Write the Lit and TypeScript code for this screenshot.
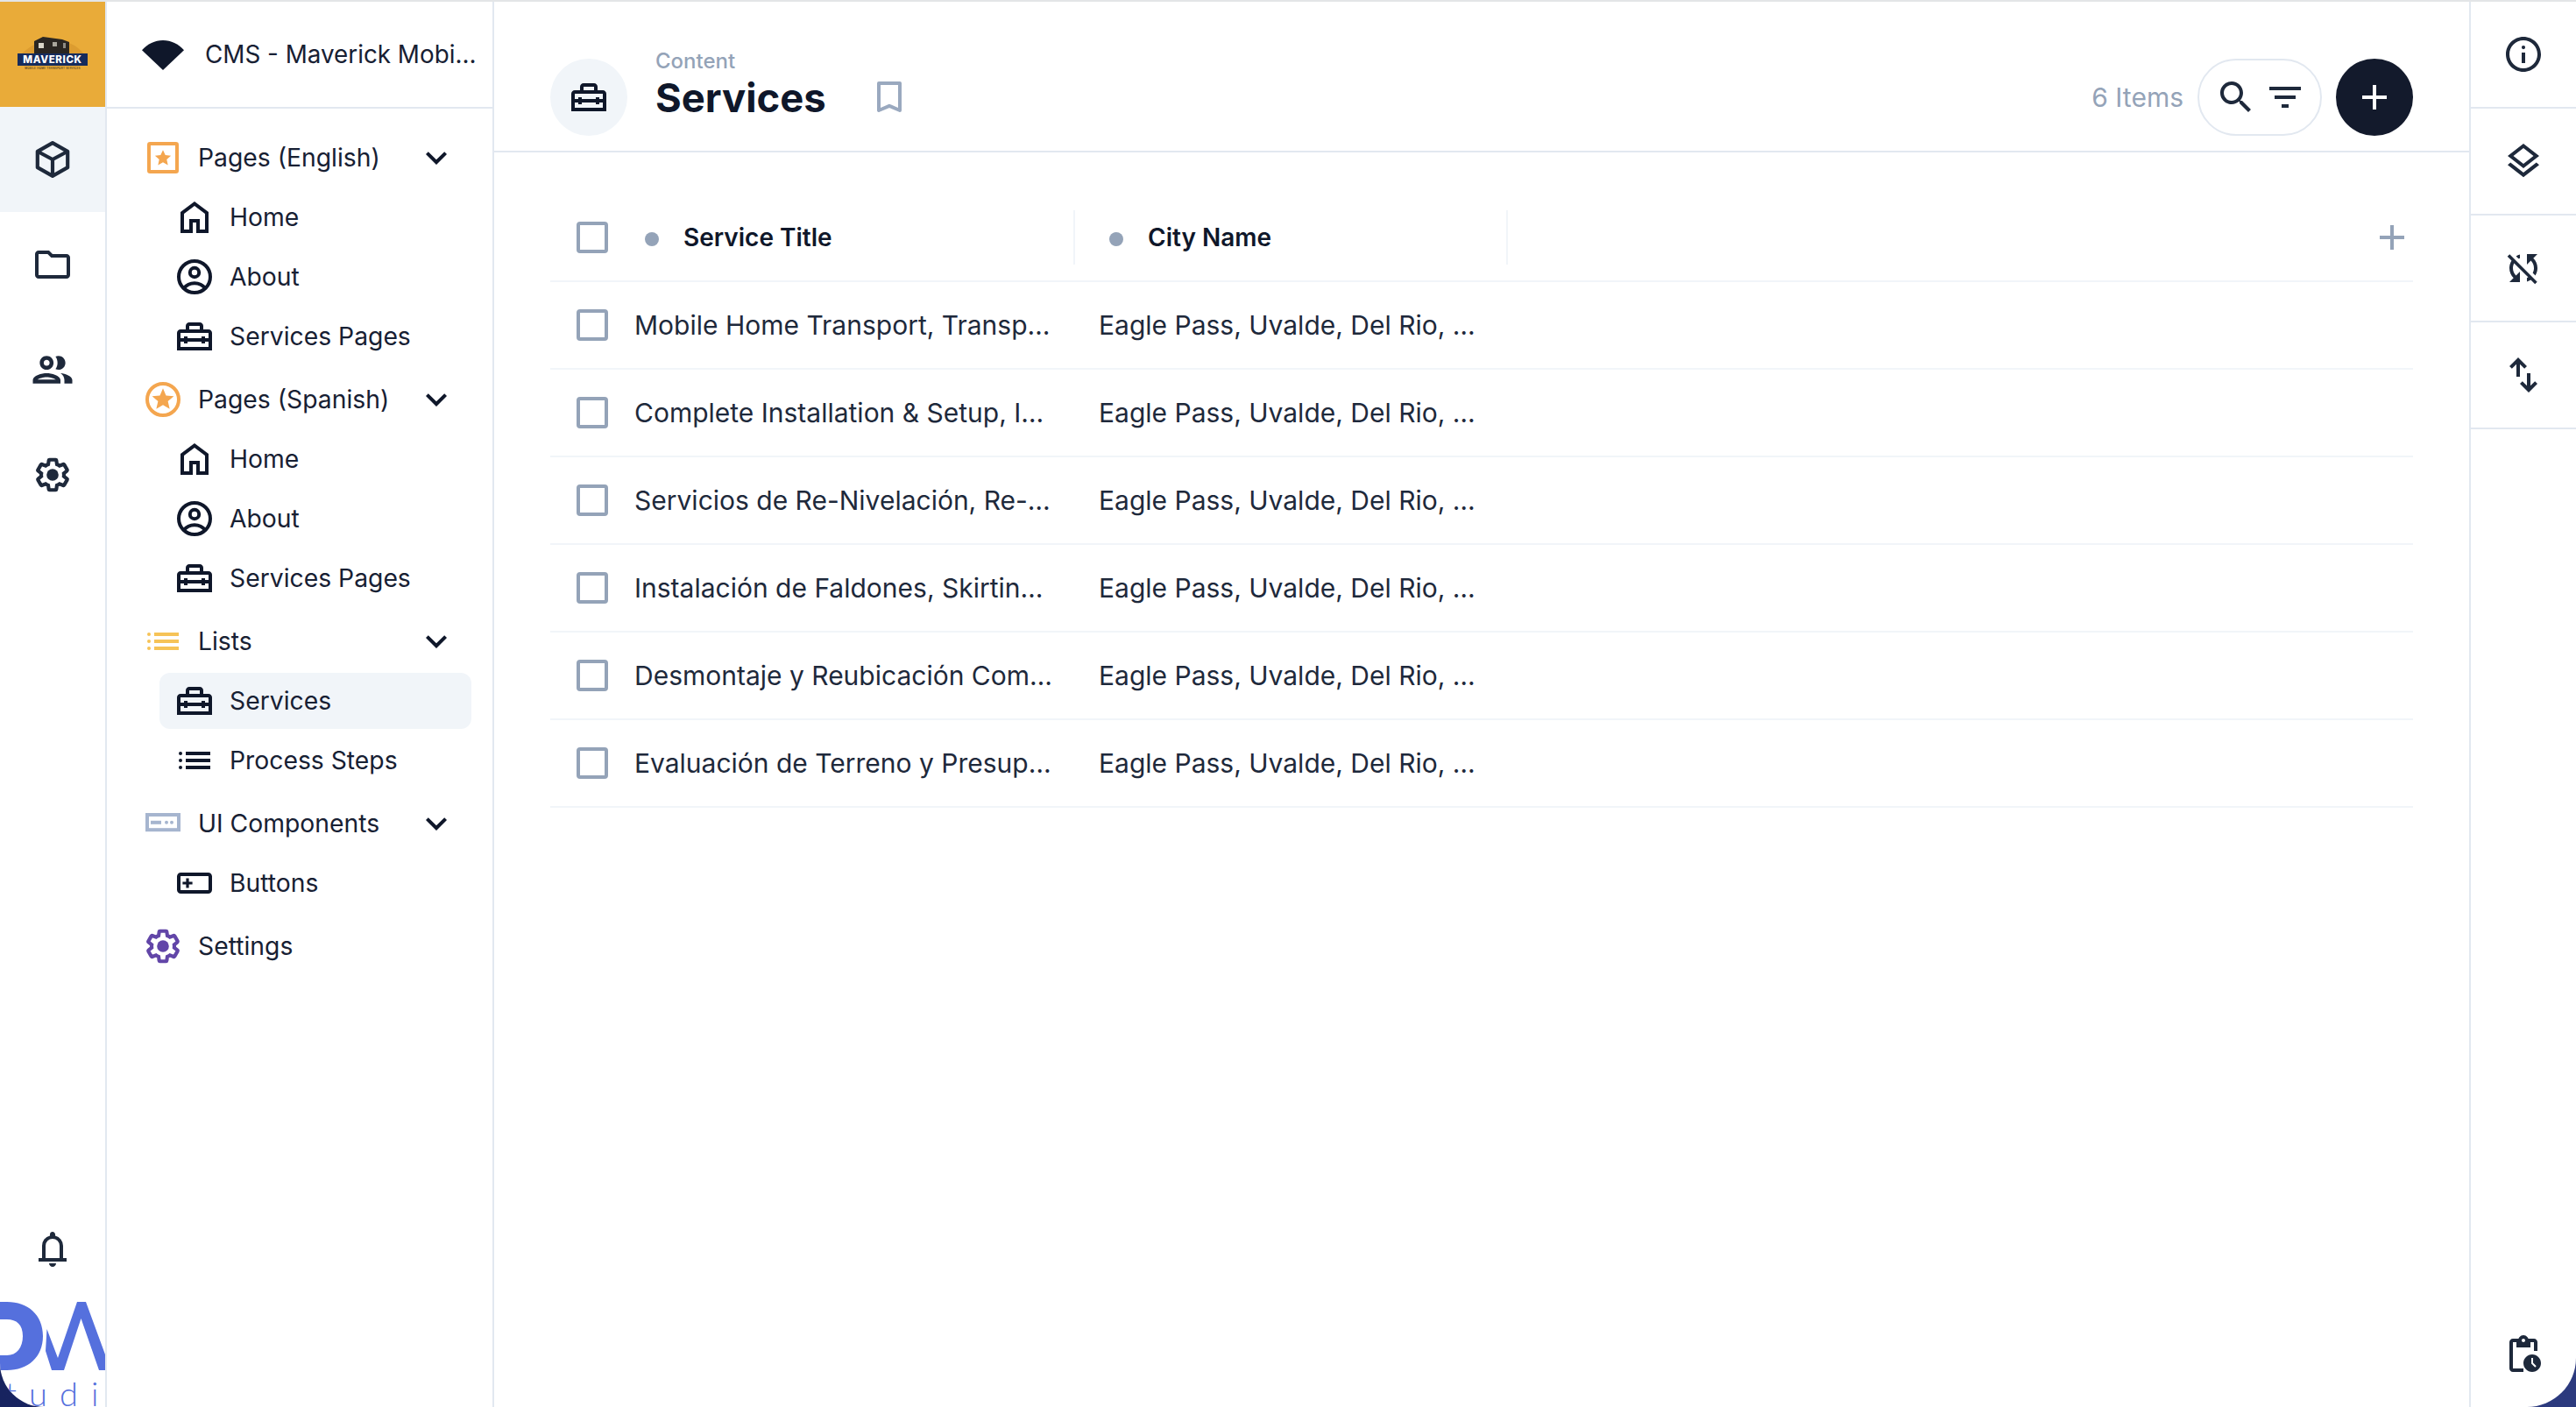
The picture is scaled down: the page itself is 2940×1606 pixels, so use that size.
import { LitElement, html, css, svg } from "lit";
import { customElement } from "lit/decorators.js";

const P: Record<string, any> = {
  home: svg`<path d="M6 19h3v-6h6v6h3v-9l-6-4.5L6 10v9zm-2 2V9l8-6 8 6v12h-7v-6h-2v6H4z"/>`,
  account: svg`<g fill="none" stroke="currentColor" stroke-width="2"><circle cx="12" cy="12" r="9"/><circle cx="12" cy="9.5" r="2.6"/><path d="M5.8 18.6c1.6-2 3.7-3 6.2-3s4.6 1 6.2 3"/></g>`,
  case: svg`<path d="M20 8h-3V6c0-1.1-.9-2-2-2H9c-1.1 0-2 .9-2 2v2H4c-1.1 0-2 .9-2 2v10h20V10c0-1.1-.9-2-2-2zM9 6h6v2H9V6zm11 12H4v-3h2v1h2v-1h8v1h2v-1h2v3zm-2-5v-1h-2v1H8v-1H6v1H4v-3h16v3h-2z"/>`,
  cube: svg`<g fill="none" stroke="currentColor" stroke-width="2.1" stroke-linejoin="round"><path d="M12 2.6l8.6 4.8v9.2L12 21.4l-8.6-4.8V7.4z"/><path d="M3.6 7.5L12 12l8.4-4.5M12 12v9.2"/></g>`,
  folder: svg`<path d="M4 20c-.55 0-1.02-.2-1.41-.59C2.2 19.02 2 18.55 2 18V6c0-.55.2-1.02.59-1.41C2.98 4.2 3.45 4 4 4h6l2 2h8c.55 0 1.02.2 1.41.59.39.39.59.86.59 1.41v10c0 .55-.2 1.02-.59 1.41-.39.39-.86.59-1.41.59H4zm0-2h16V8h-8.83l-2-2H4v12z"/>`,
  group: svg`<path d="M9 13.75c-2.34 0-7 1.17-7 3.5V19h14v-1.75c0-2.33-4.66-3.5-7-3.5zM4.34 17c.84-.58 2.87-1.25 4.66-1.25s3.82.67 4.66 1.25H4.34zM9 12c1.93 0 3.5-1.57 3.5-3.5S10.93 5 9 5 5.5 6.57 5.5 8.5 7.07 12 9 12zm0-5c.83 0 1.5.67 1.5 1.5S9.83 10 9 10s-1.5-.67-1.5-1.5S8.17 7 9 7zm7.04 6.81c1.16.84 1.96 1.96 1.96 3.44V19h4v-1.75c0-2.02-3.5-3.17-5.96-3.44zM15 12c1.93 0 3.5-1.57 3.5-3.5S16.93 5 15 5c-.54 0-1.04.13-1.5.35.63.89 1 1.98 1 3.15s-.37 2.26-1 3.15c.46.22.96.35 1.5.35z"/>`,
  gear: svg`<g transform="translate(12 12) scale(.9) translate(-12 -12)"><path fill="none" stroke="currentColor" stroke-width="2.3" stroke-linejoin="miter" d="M19.14 12.94c.04-.3.06-.61.06-.94 0-.32-.02-.64-.07-.94l2.03-1.58c.18-.14.23-.41.12-.61l-1.92-3.32c-.12-.22-.37-.29-.59-.22l-2.39.96c-.5-.38-1.03-.7-1.62-.94l-.36-2.54c-.04-.24-.24-.41-.48-.41h-3.84c-.24 0-.43.17-.47.41l-.36 2.54c-.59.24-1.13.57-1.62.94l-2.39-.96c-.22-.08-.47 0-.59.22L2.74 8.87c-.12.21-.08.47.12.61l2.03 1.58c-.05.3-.09.63-.09.94s.02.64.07.94l-2.03 1.58c-.18.14-.23.41-.12.61l1.92 3.32c.12.22.37.29.59.22l2.39-.96c.5.38 1.03.7 1.62.94l.36 2.54c.05.24.24.41.48.41h3.84c.24 0 .44-.17.47-.41l.36-2.54c.59-.24 1.13-.56 1.62-.94l2.39.96c.22.08.47 0 .59-.22l1.92-3.32c.12-.22.07-.47-.12-.61l-2.01-1.58z"/></g><circle cx="12" cy="12" r="3.4"/>`,
  chevron: svg`<path d="M16.59 8.59L12 13.17 7.41 8.59 6 10l6 6 6-6z"/>`,
  starbox: svg`<rect x="4" y="4" width="16" height="16" rx=".6" fill="none" stroke="currentColor" stroke-width="2"/><path d="M12 7.6l1.35 2.95 3.2.35-2.4 2.15.68 3.15L12 14.6l-2.83 1.6.68-3.15-2.4-2.15 3.2-.35z"/>`,
  starcircle: svg`<circle cx="12" cy="12" r="9" fill="none" stroke="currentColor" stroke-width="2"/><path d="M12 5.6l1.75 4.1 4.45.4-3.38 2.92 1 4.36L12 15.1l-3.82 2.28 1-4.36-3.38-2.92 4.45-.4z"/>`,
  list: svg`<rect x="7" y="7" width="14" height="2"/><rect x="7" y="11" width="14" height="2"/><rect x="7" y="15" width="14" height="2"/><circle cx="4" cy="8" r="1"/><circle cx="4" cy="12" r="1"/><circle cx="4" cy="16" r="1"/>`,
  uicomp: svg`<rect x="3" y="7" width="18" height="8.6" fill="none" stroke="currentColor" stroke-width="2"/><rect x="5" y="10.4" width="6" height="2"/><circle cx="14" cy="11.4" r="1"/><circle cx="17" cy="11.4" r="1"/>`,
  button: svg`<rect x="3" y="7" width="18" height="10" rx="1.2" fill="none" stroke="currentColor" stroke-width="2"/><path d="M7.2 9.2h1.6v2h2v1.6h-2v2H7.2v-2h-2v-1.6h2z"/>`,
  fan: svg`<path d="M0 9.6C3.2 6 7.4 4 12 4s8.8 2 12 5.6L12 21z"/>`,
  bookmark: svg`<path d="M6 4h12v15.5l-6-2.6-6 2.6z" fill="none" stroke="currentColor" stroke-width="2" stroke-linejoin="round"/>`,
  search: svg`<path d="M15.5 14h-.79l-.28-.27C15.41 12.59 16 11.11 16 9.5 16 5.91 13.09 3 9.5 3S3 5.91 3 9.5 5.91 16 9.5 16c1.61 0 3.09-.59 4.23-1.57l.27.28v.79l5 4.99L20.49 19l-4.99-5zm-6 0C7.01 14 5 11.99 5 9.5S7.01 5 9.5 5 14 7.01 14 9.5 11.99 14 9.5 14z"/>`,
  filter: svg`<path d="M10 18h4v-2h-4v2zM3 6v2h18V6H3zm3 7h12v-2H6v2z"/>`,
  plus: svg`<path d="M19 13h-6v6h-2v-6H5v-2h6V5h2v6h6v2z"/>`,
  info: svg`<path d="M11 11h2v6h-2zM12 7a1.05 1.05 0 100 2.1A1.05 1.05 0 0012 7zm0-5C6.48 2 2 6.48 2 12s4.48 10 10 10 10-4.48 10-10S17.52 2 12 2zm0 18c-4.41 0-8-3.59-8-8s3.59-8 8-8 8 3.59 8 8-3.59 8-8 8z"/>`,
  layers: svg`<path d="M11.99 18.54l-7.37-5.73L3 14.07l9 7 9-7-1.63-1.27zM12 16l7.36-5.73L21 9l-9-7-9 7 1.63 1.27L12 16zm0-11.47L17.74 9 12 13.47 6.26 9 12 4.53z"/>`,
  syncoff: svg`<path d="M10 6.35V4.26c-.8.21-1.55.54-2.23.96l1.46 1.46c.25-.12.5-.24.77-.33zm-7.14-.94l2.36 2.36C4.45 8.99 4 10.44 4 12c0 2.21.91 4.2 2.36 5.64L4 20h6v-6l-2.24 2.24C6.68 15.15 6 13.66 6 12c0-1 .25-1.94.68-2.77l8.08 8.08c-.25.13-.5.25-.77.34v2.09c.8-.21 1.55-.54 2.23-.96l2.36 2.36 1.27-1.27L4.14 4.14 2.86 5.41zM20 4h-6v6l2.24-2.24C17.32 8.85 18 10.34 18 12c0 1-.25 1.94-.68 2.77l1.46 1.46C19.55 15.01 20 13.56 20 12c0-2.21-.91-4.2-2.36-5.64L20 4z"/>`,
  swap: svg`<path d="M8 13V5.825L5.425 8.4 4 7l5-5 5 5-1.425 1.4L10 5.825V13H8zm7 9l-5-5 1.425-1.4L14 18.175V11h2v7.175L18.575 15.6 20 17l-5 5z"/>`,
  bell: svg`<path d="M4 19v-2h2v-7q0-2.075 1.25-3.688T10.5 4.2v-.7q0-.625.438-1.063T12 2q.625 0 1.063.438T13.5 3.5v.7q2 .5 3.25 2.113T18 10v7h2v2H4zm8 3q-.825 0-1.413-.587T10 20h4q0 .825-.587 1.413T12 22zm-4-5h8v-7q0-1.65-1.175-2.825T12 6q-1.65 0-2.825 1.175T8 10v7z"/>`,
  pending: svg`<path d="M17 12c-2.76 0-5 2.24-5 5s2.24 5 5 5 5-2.24 5-5-2.24-5-5-5zm1.65 7.35L16.5 17.2V14h1v2.79l1.85 1.85-.7.71zM18 3h-3.18C14.4 1.84 13.3 1 12 1s-2.4.84-2.82 2H6c-1.1 0-2 .9-2 2v15c0 1.1.9 2 2 2h6v-2H6V5h2v3h8V5h2v5h2V5c0-1.1-.9-2-2-2zm-6 2c-.55 0-1-.45-1-1s.45-1 1-1 1 .45 1 1-.45 1-1 1z"/>`,
};

const ic = (name: string, cls = "") =>
  html`<svg class="ic ${cls}" viewBox="0 0 24 24" fill="currentColor">${P[name]}</svg>`;

type Sub = { icon: string; label: string; active?: boolean };
type Group = { icon: string; tone: string; label: string; subs: Sub[]; chevron: boolean };

const pages: Sub[] = [
  { icon: "home", label: "Home" },
  { icon: "account", label: "About" },
  { icon: "case", label: "Services Pages" },
];

const NAV: Group[] = [
  { icon: "starbox", tone: "orange", label: "Pages (English)", subs: pages, chevron: true },
  { icon: "starcircle", tone: "orange", label: "Pages (Spanish)", subs: pages, chevron: true },
  {
    icon: "list", tone: "yellow", label: "Lists", chevron: true,
    subs: [
      { icon: "case", label: "Services", active: true },
      { icon: "list", label: "Process Steps" },
    ],
  },
  {
    icon: "uicomp", tone: "steel", label: "UI Components", chevron: true,
    subs: [{ icon: "button", label: "Buttons" }],
  },
  { icon: "gear", tone: "purple", label: "Settings", subs: [], chevron: false },
];

const ROWS: [string, string][] = [
  "Mobile Home Transport, Transporte de Casas Móviles",
  "Complete Installation & Setup, Instalación Completa",
  "Servicios de Re-Nivelación, Re-Leveling Services",
  "Instalación de Faldones, Skirting Installation",
  "Desmontaje y Reubicación Completa, Teardown",
  "Evaluación de Terreno y Presupuesto, Site Evaluation",
].map((t) => [t, "Eagle Pass, Uvalde, Del Rio, Brackettville, Texas"]);

@customElement("app-root")
export class AppRoot extends LitElement {
  static styles = css`
    :host {
      display: block;
      height: 100vh;
      background: linear-gradient(90deg, #17235f, #2c3a7e);
      font-family: Inter, "Noto Sans", sans-serif;
      color: #0f172a;
      overflow: hidden;
    }
    * { box-sizing: border-box; }
    .window {
      display: flex;
      height: 100%;
      background: #fff;
      border-top: 2px solid #e3e5e7;
      border-radius: 0 0 56px 50px;
      overflow: hidden;
    }
    .ic { width: 48px; height: 48px; flex: none; display: block; }
    .ic.big { width: 54px; height: 54px; }

    .rail {
      width: 122px;
      flex: none;
      display: flex;
      flex-direction: column;
      border-right: 2px solid #e2e8f0;
      color: #1e293b;
    }
    .tile {
      height: 120px;
      flex: none;
      display: flex;
      align-items: center;
      justify-content: center;
    }
    .tile.active { background: #f1f5f9; }
    .spacer { flex: 1; }
    .brand {
      height: 120px;
      flex: none;
      background: #e9ab39;
      display: flex;
      flex-direction: column;
      align-items: center;
    }
    .brand svg { display: block; }
    .brand-house { margin-top: 40px; width: 90px; height: 19px; }
    .brand-banner {
      width: 80px;
      height: 14px;
      background: #152b5c;
      color: #fff;
      font: 800 11.5px/14px Inter, sans-serif;
      letter-spacing: 0.6px;
      text-align: center;
      white-space: nowrap;
    }
    .brand-sub {
      font: 500 3.1px/4px Inter, sans-serif;
      color: #4a3a1c;
      margin-top: 1px;
      white-space: nowrap;
      letter-spacing: 0.2px;
    }
    .dm { width: 120px; height: 120px; display: block; flex: none; }
    .dm text { font: 300 38px Lato, sans-serif; fill: #5570dd; }

    .side {
      width: 442px;
      flex: none;
      border-right: 2px solid #e2e8f0;
      display: flex;
      flex-direction: column;
    }
    .side-head {
      height: 122px;
      flex: none;
      border-bottom: 2px solid #e2e8f0;
      padding: 0 16px 0 40px;
      display: flex;
      align-items: center;
      gap: 24px;
      color: #0f172a;
    }
    .side-title {
      font-size: 27.8px;
      min-width: 0;
      white-space: nowrap;
      overflow: hidden;
      text-overflow: ellipsis;
      color: #172033;
    }
    .nav {
      padding: 24px 24px 0;
      display: flex;
      flex-direction: column;
      gap: 8px;
    }
    .group { display: flex; flex-direction: column; gap: 4px; }
    .row {
      height: 64px;
      display: flex;
      align-items: center;
      gap: 16px;
      padding-left: 16px;
      border-radius: 12px;
      font-size: 28.3px;
      color: #172033;
    }
    .row .grow { flex: 1; }
    .row.sub { margin-left: 36px; }
    .row.active { background: #f1f5f9; }
    .row .chev { margin-right: 16px; color: #0f172a; }
    .row .dark { color: #0f172a; }
    .orange { color: #f4a64f; }
    .yellow { color: #f6c357; }
    .steel { color: #a6b5cf; }
    .purple { color: #6246a8; }

    .main { flex: 1; min-width: 0; display: flex; flex-direction: column; }
    .head {
      height: 172px;
      flex: none;
      border-bottom: 2px solid #e2e8f0;
      padding: 65px 64px 0;
      display: flex;
      align-items: flex-start;
    }
    .round {
      width: 88px;
      height: 88px;
      border-radius: 50%;
      background: #f1f5f9;
      display: flex;
      align-items: center;
      justify-content: center;
      flex: none;
      color: #0f172a;
    }
    .titles { margin: -11px 0 0 32px; display: flex; flex-direction: column; }
    .crumb { font-size: 24px; line-height: 28px; font-weight: 500; color: #94a3b8; }
    .title { font-size: 45.4px; line-height: 56px; font-weight: 700; color: #0f172a; }
    .mark { color: #9aa9bf; margin: 20px 0 0 48px; }
    .count { margin-left: auto; font-size: 30px; line-height: 88px; color: #94a3b8; }
    .pill {
      margin-left: 16px;
      height: 88px;
      border: 2px solid #e2e8f0;
      border-radius: 44px;
      padding: 0 16px 0 18px;
      display: flex;
      align-items: center;
      gap: 8px;
      color: #1e293b;
    }
    .add {
      margin-left: 16px;
      width: 88px;
      height: 88px;
      border-radius: 50%;
      background: #131a2c;
      color: #fff;
      display: flex;
      align-items: center;
      justify-content: center;
      flex: none;
    }

    .table { padding: 48px 64px 0; }
    .thead, .trow {
      display: grid;
      grid-template-columns: 96px 530px 1fr;
      align-items: center;
      border-bottom: 2px solid #f1f5f9;
      height: 100px;
    }
    .check {
      width: 36px;
      height: 36px;
      margin-left: 30px;
      border: 4px solid #94a3b8;
      border-radius: 4px;
      background: #fff;
    }
    .th {
      display: flex;
      align-items: center;
      height: 62px;
      padding-left: 12px;
      border-right: 2px solid #f1f5f9;
      font-size: 28px;
      font-weight: 600;
      color: #0f172a;
      gap: 28px;
    }
    .th.first { width: 503px; }
    .th.second { width: 467px; }
    .dot { width: 16px; height: 16px; border-radius: 50%; background: #94a3b8; margin-top: 4px; flex: none; }
    .thcell { display: flex; align-items: center; }
    .thcell.end { justify-content: space-between; }
    .addcol { color: #94a3b8; }
    .td {
      font-size: 30px;
      color: #1e293b;
      white-space: nowrap;
      overflow: hidden;
      text-overflow: ellipsis;
    }
    .td.a { max-width: 482px; }
    .td.b { max-width: 430px; }

    .aside {
      width: 122px;
      flex: none;
      border-left: 2px solid #e2e8f0;
      display: flex;
      flex-direction: column;
      color: #1e293b;
    }
    .cell {
      height: 122px;
      flex: none;
      border-bottom: 2px solid #e2e8f0;
      display: flex;
      align-items: center;
      justify-content: center;
    }
    .cell.plain { border-bottom: 0; height: 120px; }
  `;

  private navRow(s: Sub) {
    return html`<div class="row sub ${s.active ? "active" : ""}">
      ${ic(s.icon, "dark")}<span>${s.label}</span>
    </div>`;
  }

  private brand() {
    return html`<div class="brand">
      <svg class="brand-house" viewBox="0 0 90 19">
        <path d="M10 19C20 10 30 5 40 4h10c12 1 22 5 30 15z" fill="#dc9c30"/>
        <path d="M24 5l10-5 22 3 8 3v13H24z" fill="#2a2622"/>
        <rect x="29" y="7" width="6" height="6" fill="#d8d4c8"/>
        <rect x="45" y="6" width="5" height="5" fill="#a9a69c"/>
        <rect x="57" y="7" width="3" height="6" fill="#8e8b84"/>
      </svg>
      <div class="brand-banner">MAVERICK</div>
      <div class="brand-sub">MOBILE HOME TRANSPORT SERVICES</div>
    </div>`;
  }

  private dm() {
    return html`<svg class="dm" viewBox="0 0 120 120" fill="#5570dd">
      <path d="M0 0h8C32 0 49 15 49 39S32 78 8 78H0V61h8c11 0 18-9 18-22S19 20 8 20H0z"/>
      <path d="M88 0h10l22 60v18h-7L92.5 19 73 78H59l-7-22 1.500-25L66 64z"/>
      <text y="119" x="6 33 68 104">tudi</text>
    </svg>`;
  }

  render() {
    return html`<div class="window">
      <div class="rail">
        ${this.brand()}
        <div class="tile active">${ic("cube")}</div>
        <div class="tile">${ic("folder")}</div>
        <div class="tile">${ic("group", "big")}</div>
        <div class="tile">${ic("gear")}</div>
        <div class="spacer"></div>
        <div class="tile">${ic("bell")}</div>
        ${this.dm()}
      </div>

      <div class="side">
        <div class="side-head">${ic("fan")}<div class="side-title">CMS - Maverick Mobile Home Transport</div></div>
        <div class="nav">
          ${NAV.map(
            (g) => html`<div class="group">
              <div class="row">
                ${ic(g.icon, g.tone)}<span class="grow">${g.label}</span>
                ${g.chevron ? ic("chevron", "chev") : ""}
              </div>
              ${g.subs.map((s) => this.navRow(s))}
            </div>`
          )}
        </div>
      </div>

      <div class="main">
        <div class="head">
          <div class="round">${ic("case")}</div>
          <div class="titles">
            <div class="crumb">Content</div>
            <div class="title">Services</div>
          </div>
          ${ic("bookmark", "mark")}
          <div class="count">6 Items</div>
          <div class="pill">${ic("search")}${ic("filter")}</div>
          <div class="add">${ic("plus")}</div>
        </div>
        <div class="table">
          <div class="thead">
            <div class="check"></div>
            <div class="thcell"><div class="th first"><span class="dot"></span>Service Title</div></div>
            <div class="thcell end"><div class="th second"><span class="dot"></span>City Name</div>${ic("plus", "addcol")}</div>
          </div>
          ${ROWS.map(
            ([a, b]) => html`<div class="trow">
              <div class="check"></div>
              <div class="td a">${a}</div>
              <div class="td b">${b}</div>
            </div>`
          )}
        </div>
      </div>

      <div class="aside">
        <div class="cell">${ic("info")}</div>
        <div class="cell">${ic("layers")}</div>
        <div class="cell">${ic("syncoff")}</div>
        <div class="cell">${ic("swap")}</div>
        <div class="spacer"></div>
        <div class="cell plain">${ic("pending")}</div>
      </div>
    </div>`;
  }
}
